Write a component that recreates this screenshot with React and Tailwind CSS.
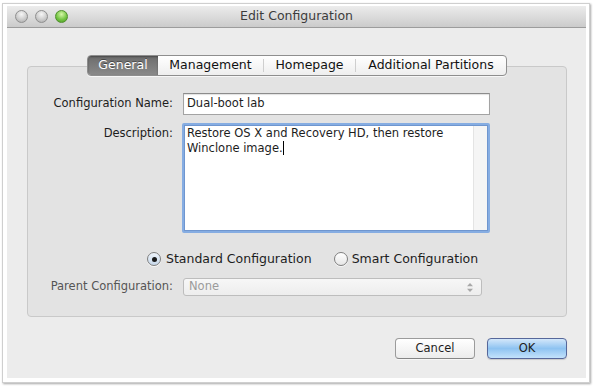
export default function App() {
  return (
    <div className="w-[594px] h-[386px] bg-white overflow-hidden pt-[3px] pl-[2px] font-['DejaVu_Sans',sans-serif] text-[#1d1d1d]">
      <div className="w-[588px] h-[380px] bg-white border border-[#cfcfcf] shadow-[1px_1px_2px_rgba(0,0,0,0.35)] pl-[4px] pt-[2px]">
        {/* WINDOW */}
        <div className="w-[579px] h-[372px] bg-[#ececec] flex flex-col">
          {/* TITLE BAR */}
          <div className="h-[22px] shrink-0 grid grid-cols-[1fr_auto_1fr] items-center bg-linear-to-b from-[#ececec] to-[#cbcbcb] border-b border-[#9c9c9c]">
            <div className="flex items-center gap-[7px] pl-[8px]">
              <Light />
              <Light />
              <Light green />
            </div>
            <div className="text-[12.5px] text-[#3c3c3c] leading-none">Edit Configuration</div>
            <div />
          </div>

          {/* GROUP BOX */}
          <div className="mt-[38px] ml-[20px] mr-[19px] h-[251px] shrink-0 rounded-[4px] border border-[#c9c9c9] bg-[#e3e3e3] flex flex-col">
            <div className="-mt-[12px] flex justify-center">
              <div className="w-[420px] h-[21px] flex rounded-[4px] border border-[#8e8e8e] bg-linear-to-b from-white to-[#eeeeee] overflow-hidden text-[12.5px] text-[#111111] shadow-[0_1px_0_rgba(255,255,255,0.7)]">
                <div className="w-[70px] flex items-center justify-center bg-linear-to-b from-[#6c6c6c] to-[#8a8a8a] text-white shadow-[inset_0_1px_2px_rgba(0,0,0,0.35)] [text-shadow:0_-1px_0_rgba(0,0,0,0.4)]">General</div>
                <div className="w-[105px] flex items-center justify-center">Management</div>
                <div className="w-px my-[3px] bg-[#cfcfcf]" />
                <div className="w-[91px] flex items-center justify-center">Homepage</div>
                <div className="w-px my-[3px] bg-[#cfcfcf]" />
                <div className="flex-1 flex items-center justify-center">Additional Partitions</div>
              </div>
            </div>

            {/* NAME */}
            <div className="mt-[17px] flex items-center">
              <div className="w-[145px] text-right text-[11.5px]">Configuration Name:</div>
              <div className="ml-[10px] w-[307px] h-[22px] bg-white border border-[#a3a3a3] border-t-[#8c8c8c] shadow-[inset_0_1px_1px_rgba(0,0,0,0.12)] text-[11.5px] pl-[3px] flex items-center">
                Dual-boot lab
              </div>
            </div>

            {/* DESCRIPTION */}
            <div className="mt-[8px] flex items-start">
              <div className="w-[145px] text-right text-[11.5px] leading-[15px] pt-[3px]">Description:</div>
              <div className="ml-[9px] w-[308px] h-[110px] flex bg-white border-2 border-[#86ade2] rounded-[2px] shadow-[inset_0_0_0_1px_#6f96cf]">
                <div className="flex-1 pl-[3px] pt-[1px] text-[11.5px] leading-[15px]">
                  Restore OS X and Recovery HD, then restore Winclone image.
                  <span className="inline-block w-px h-[14px] bg-black align-[-3px]" />
                </div>
                <div className="w-[14px] my-px mr-px bg-[#f5f5f5] border-l border-[#e4e4e4]" />
              </div>
            </div>

            {/* RADIOS */}
            <div className="mt-[19px] ml-[119px] h-[14px] flex items-center text-[12.5px] leading-[14px]">
              <Radio checked />
              <span className="ml-[5px]">Standard Configuration</span>
              <div className="ml-[22px]">
                <Radio />
              </div>
              <span className="ml-[4px]">Smart Configuration</span>
            </div>

            {/* PARENT */}
            <div className="mt-[12px] flex items-center">
              <div className="w-[145px] text-right text-[11.5px] text-[#555555]">Parent Configuration:</div>
              <div className="ml-[10px] w-[299px] h-[18px] rounded-[3px] border border-[#bdbdbd] bg-linear-to-b from-[#f7f7f7] to-[#ededed] flex items-center justify-between pl-[5px] pr-[8px] text-[11.5px] text-[#9b9b9b]">
                <span>None</span>
                <svg width="6" height="9" viewBox="0 0 6 9" className="text-[#a8a8a8]">
                  <path d="M3 0 L6 3.2 L0 3.2 Z" fill="currentColor" />
                  <path d="M3 9 L6 5.8 L0 5.8 Z" fill="currentColor" />
                </svg>
              </div>
            </div>
          </div>

          {/* BUTTONS */}
          <div className="mt-[21px] mr-[19px] flex justify-end gap-[12px] text-[11.5px]">
            <div className="w-[80px] h-[21px] rounded-[4px] border border-[#9b9b9b] border-b-[#858585] bg-linear-to-b from-white to-[#ececec] shadow-[0_1px_0_rgba(255,255,255,0.6)] flex items-center justify-center">
              Cancel
            </div>
            <div className="w-[80px] h-[21px] rounded-[4px] border border-[#56679a] bg-linear-to-b from-[#d3e7fa] via-[#8ec3f1] to-[#c3e2fb] shadow-[0_1px_1px_rgba(0,0,0,0.15)] flex items-center justify-center">
              OK
            </div>
          </div>
        </div>
      </div>
    </div>
  );
}

function Light({ green }) {
  return green ? (
    <div className="w-[13px] h-[13px] rounded-full border border-[#4f8f2c] bg-[radial-gradient(circle_at_50%_30%,#d6f7a8,#76c645_55%,#4a9a22)]" />
  ) : (
    <div className="w-[13px] h-[13px] rounded-full border border-[#8f8f8f] bg-[radial-gradient(circle_at_50%_30%,#f6f6f6,#cdcdcd_55%,#a8a8a8)]" />
  );
}

function Radio({ checked }) {
  return (
    <div className={"w-[14px] h-[14px] rounded-full border border-[#7f7f7f] flex items-center justify-center shadow-[0_1px_0_rgba(255,255,255,0.7)] " + (checked ? "bg-linear-to-b from-[#eef4fb] to-[#c7d8ea]" : "bg-linear-to-b from-white to-[#e6e6e6]")}>
      {checked && <div className="w-[5px] h-[5px] rounded-full bg-[#1a1a1a]" />}
    </div>
  );
}
